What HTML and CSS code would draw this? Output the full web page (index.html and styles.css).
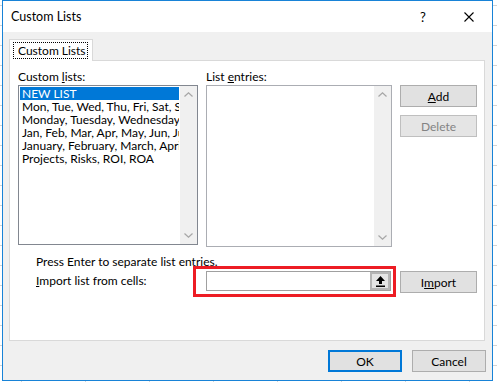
FILE: index.html
```html
<!DOCTYPE html>
<html lang="en">
<head>
  <meta charset="UTF-8">
  <link rel="stylesheet" href="styles.css">
  <title>Custom Lists</title>
</head>
<body>

<div class="dialog">
  <div class="titlebar">
    <span class="title">Custom Lists</span>
    <span class="caption-btn">?</span>
    <span class="caption-btn">
      <svg width="10" height="10" viewBox="0 0 10 10"><path d="M0.5 0.5 L9.5 9.5 M9.5 0.5 L0.5 9.5" stroke="#000" stroke-width="1.1"/></svg>
    </span>
  </div>

  <div class="content">
    <div class="tabs">
      <div class="tab"><span class="tab-label">Custom Lists</span></div>
    </div>

    <div class="panel">
      <div class="lists-row">
        <div class="field">
          <div class="label">Custom <u>l</u>ists:</div>
          <div class="listbox lists">
            <div class="items">
              <div class="item selected">NEW LIST</div>
              <div class="item">Mon, Tue, Wed, Thu, Fri, Sat, Sun</div>
              <div class="item">Monday, Tuesday, Wednesday, Thursday</div>
              <div class="item">Jan, Feb, Mar, Apr, May, Jun, Jul</div>
              <div class="item">January, February, March, April</div>
              <div class="item">Projects, Risks, ROI, ROA</div>
            </div>
            <div class="scrollbar">
              <span class="arrow"><svg width="9" height="5" viewBox="0 0 9 5"><path d="M0.5 4.5 L4.5 0.8 L8.5 4.5" fill="none" stroke="#a6a6a6" stroke-width="1.2"/></svg></span>
              <span class="arrow"><svg width="9" height="5" viewBox="0 0 9 5"><path d="M0.5 0.5 L4.5 4.2 L8.5 0.5" fill="none" stroke="#a6a6a6" stroke-width="1.2"/></svg></span>
            </div>
          </div>
        </div>

        <div class="field">
          <div class="label">List <u>e</u>ntries:</div>
          <div class="listbox entries">
            <div class="items"></div>
            <div class="scrollbar">
              <span class="arrow"><svg width="9" height="5" viewBox="0 0 9 5"><path d="M0.5 4.5 L4.5 0.8 L8.5 4.5" fill="none" stroke="#a6a6a6" stroke-width="1.2"/></svg></span>
              <span class="arrow"><svg width="9" height="5" viewBox="0 0 9 5"><path d="M0.5 0.5 L4.5 4.2 L8.5 0.5" fill="none" stroke="#a6a6a6" stroke-width="1.2"/></svg></span>
            </div>
          </div>
        </div>

        <div class="side-buttons">
          <button class="btn"><u>A</u>dd</button>
          <button class="btn" disabled>Delete</button>
        </div>
      </div>

      <div class="hint">Press Enter to separate list entries.</div>

      <div class="import-row">
        <div class="import-label"><u>I</u>mport list from cells:</div>
        <div class="ref-field">
          <span class="ref-btn">
            <svg width="9" height="11" viewBox="0 0 9 11"><path d="M4.5 0 L9 5 L6 5 L6 8 L3 8 L3 5 L0 5 Z" fill="#000"/><rect x="0" y="9.5" width="9" height="1.5" fill="#000"/></svg>
          </span>
          <div class="highlight"></div>
        </div>
        <button class="btn import-btn">I<u>m</u>port</button>
      </div>
    </div>

    <div class="footer">
      <button class="btn wide default">OK</button>
      <button class="btn wide">Cancel</button>
    </div>
  </div>
</div>

</body>
</html>
```

FILE: styles.css
```css
body {
  margin: 0;
  padding: 0 4px 1px 2px;
  font-family: Lato, "Noto Sans", sans-serif;
  font-size: 12px;
  color: #000;
  background-color: #fff;
  background-image: linear-gradient(to right, #d4d4d4 1px, transparent 1px),
    linear-gradient(to bottom, #d4d4d4 1px, transparent 1px);
  background-size: 64px 20px;
  background-position: 21px 5px;
}

.dialog {
  width: 491px;
  height: 381px;
  box-sizing: border-box;
  border: 1px solid #1883d7;
  background: #f0f0f0;
  display: flex;
  flex-direction: column;
}

.titlebar {
  height: 31px;
  flex: none;
  background: #fff;
  display: flex;
  align-items: center;
}

.title {
  flex: 1;
  padding-left: 8px;
  font-size: 12.5px;
}

.caption-btn {
  width: 46px;
  height: 31px;
  display: flex;
  align-items: center;
  justify-content: center;
  font-size: 13px;
}

.content {
  padding: 7px 7px 8px 6px;
}

.tabs {
  display: flex;
}

.tab {
  position: relative;
  z-index: 1;
  background: #fff;
  border: 1px solid #d9d9d9;
  border-bottom: 0;
  padding: 2px 4px 2px 3px;
  margin-bottom: -1px;
}

.tab-label {
  display: block;
  box-sizing: border-box;
  width: 75px;
  height: 17px;
  line-height: 15px;
  padding-left: 4px;
  border: 1px dotted #000;
  white-space: nowrap;
}

.panel {
  height: 281px;
  box-sizing: border-box;
  background: #fff;
  border: 1px solid #d9d9d9;
  padding: 8px 7px 0 8px;
}

.lists-row {
  display: flex;
  gap: 8px;
}

.label {
  height: 16px;
  line-height: 16px;
}

.listbox {
  box-sizing: border-box;
  display: flex;
  background: #fff;
}

.listbox.lists {
  width: 180px;
  height: 160px;
  border: 1px solid #828790;
}

.listbox.entries {
  width: 186px;
  height: 162px;
  border: 1px solid #abadb3;
}

.items {
  flex: 1;
  min-width: 0;
  padding: 1px;
  overflow: hidden;
  white-space: nowrap;
}

.item {
  height: 13px;
  line-height: 13px;
  padding-left: 2px;
  overflow: hidden;
}

.item.selected {
  background: #0078d7;
  color: #fff;
}

.scrollbar {
  width: 17px;
  background: #f0f0f0;
  display: flex;
  flex-direction: column;
  justify-content: space-between;
}

.arrow {
  height: 17px;
  display: flex;
  align-items: center;
  justify-content: center;
}

.side-buttons {
  padding-top: 16px;
  display: flex;
  flex-direction: column;
  gap: 8px;
}

.btn {
  width: 77px;
  height: 22px;
  box-sizing: border-box;
  padding: 0;
  border: 1px solid #adadad;
  background: #e1e1e1;
  font: inherit;
  color: #000;
}

.btn:disabled {
  color: #838383;
  border-color: #bfbfbf;
  background: #e5e5e5;
}

.hint {
  margin: 7px 0 0 18px;
  height: 16px;
  line-height: 16px;
}

.import-row {
  display: flex;
  align-items: flex-start;
  margin: 1px 0 0 18px;
}

.import-label {
  width: 170px;
  margin-top: 2px;
  line-height: 16px;
}

.ref-field {
  position: relative;
  width: 185px;
  height: 20px;
  box-sizing: border-box;
  border: 1px solid #a0a0a0;
  background: #fff;
  display: flex;
  justify-content: flex-end;
}

.ref-btn {
  width: 20px;
  height: 18px;
  box-sizing: border-box;
  background: #e4e4e4;
  border: 2px solid #b4b4b4;
  display: flex;
  align-items: center;
  justify-content: center;
}

.highlight {
  position: absolute;
  top: -6px;
  left: -14px;
  right: -6px;
  bottom: -7px;
  border: 3px solid #ed1c24;
}

.import-btn {
  margin-left: 9px;
}

.footer {
  margin: 9px -1px 0 0;
  display: flex;
  justify-content: flex-end;
  gap: 10px;
}

.btn.wide {
  width: 74px;
}

.btn.default {
  border: 2px solid #0078d7;
}
```
